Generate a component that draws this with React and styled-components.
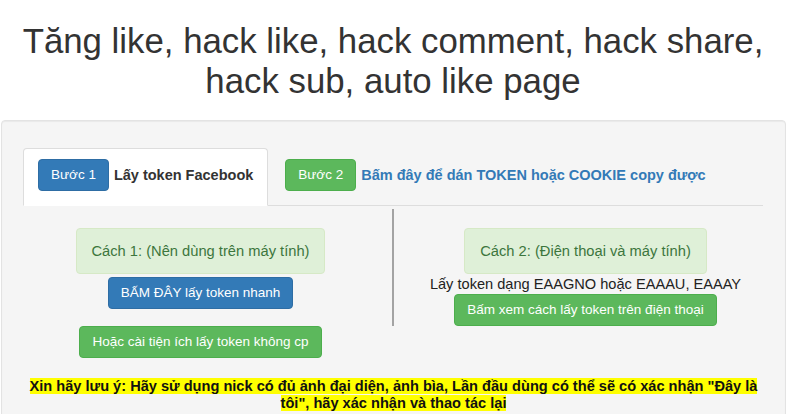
import React from 'react';
import styled, { createGlobalStyle } from 'styled-components';

const GlobalStyle = createGlobalStyle`
  html, body {
    margin: 0;
    padding: 0;
    background: #fff;
    overflow: hidden;
  }
  body {
    font-family: "Liberation Sans", Arial, Helvetica, sans-serif;
    color: #333;
    font-size: 14px;
  }
`;

const Page = styled.div`
  width: 786px;
  height: 414px;
  overflow: hidden;
`;

const Title = styled.h1`
  margin: 21px 0 20px;
  font-size: 34.8px;
  line-height: 39.6px;
  font-weight: normal;
  text-align: center;
  color: #333;
  padding: 0 10px;
`;

const Well = styled.div`
  margin-left: 1px;
  padding: 27px 0 40px;
  background: #f5f5f5;
  border: 1px solid #e3e3e3;
  border-radius: 4px;
  box-shadow: inset 0 1px 1px rgba(0, 0, 0, 0.05);
`;

const Tabs = styled.ul`
  display: flex;
  list-style: none;
  margin: 0 22px 0 21px;
  padding: 0;
  border-bottom: 1px solid #ddd;
`;

const Tab = styled.li`
  display: flex;
  align-items: center;
  gap: 5px;
  margin: 0 2px -1px 0;
  padding: 10px 14px 14px;
  border: 1px solid ${p => (p.$active ? '#ddd' : 'transparent')};
  border-bottom-color: transparent;
  border-radius: 4px 4px 0 0;
  background: ${p => (p.$active ? '#fff' : 'transparent')};
`;

const TabLabel = styled.span`
  font-size: 14.5px;
  font-weight: bold;
  color: ${p => (p.$link ? '#337ab7' : '#333')};
`;

const Button = styled.span`
  display: inline-block;
  padding: 6px 12px;
  font-size: 13.5px;
  line-height: 18px;
  color: #fff;
  white-space: nowrap;
  border-radius: 4px;
  border: 1px solid ${p => (p.$variant === 'success' ? '#4cae4c' : '#2e6da4')};
  background: ${p => (p.$variant === 'success' ? '#5cb85c' : '#337ab7')};
  margin-top: ${p => p.$mt || 0}px;
`;

const Row = styled.div`
  display: flex;
  align-items: flex-start;
  margin: 3px 0 0 6px;
`;

const Col = styled.div`
  width: 385px;
  box-sizing: border-box;
  padding-top: 19px;
  display: flex;
  flex-direction: column;
  align-items: center;
  border-left: ${p => (p.$divider ? '2px solid #a3a3a3' : 'none')};
  margin-left: ${p => (p.$divider ? '-1px' : '0')};
`;

const Alert = styled.div`
  padding: 12px 15px;
  font-size: 14.7px;
  line-height: 20px;
  color: #3c763d;
  background: #dff0d8;
  border: 1px solid #d6e9c6;
  border-radius: 4px;
`;

const Hint = styled.div`
  font-size: 14.6px;
  line-height: 20px;
  color: #222;
`;

const Note = styled.p`
  margin: 20px 0 0;
  padding: 0 20px;
  text-align: center;
  font-size: 14.6px;
  line-height: 16.5px;
  font-weight: bold;
  color: #111;
`;

const Mark = styled.span`
  background: #ffff00;
`;

export default function App() {
  return (
    <Page>
      <GlobalStyle />
      <Title>Tăng like, hack like, hack comment, hack share, hack sub, auto like page</Title>
      <Well>
        <Tabs>
          <Tab $active>
            <Button>Bước 1</Button>
            <TabLabel>Lấy token Facebook</TabLabel>
          </Tab>
          <Tab>
            <Button $variant="success">Bước 2</Button>
            <TabLabel $link>Bấm đây để dán TOKEN hoặc COOKIE copy được</TabLabel>
          </Tab>
        </Tabs>
        <Row>
          <Col>
            <Alert>Cách 1: (Nên dùng trên máy tính)</Alert>
            <Button $mt={3}>BẤM ĐÂY lấy token nhanh</Button>
            <Button $variant="success" $mt={17}>Hoặc cài tiện ích lấy token không cp</Button>
          </Col>
          <Col $divider>
            <Alert>Cách 2: (Điện thoại và máy tính)</Alert>
            <Hint>Lấy token dạng EAAGNO hoặc EAAAU, EAAAY</Hint>
            <Button $variant="success">Bấm xem cách lấy token trên điện thoại</Button>
          </Col>
        </Row>
        <Note>
          <Mark>
            Xin hãy lưu ý: Hãy sử dụng nick có đủ ảnh đại diện, ảnh bìa, Lần đầu dùng có thể sẽ có xác nhận "Đây là tôi", hãy xác nhận và thao tác lại
          </Mark>
        </Note>
      </Well>
    </Page>
  );
}
